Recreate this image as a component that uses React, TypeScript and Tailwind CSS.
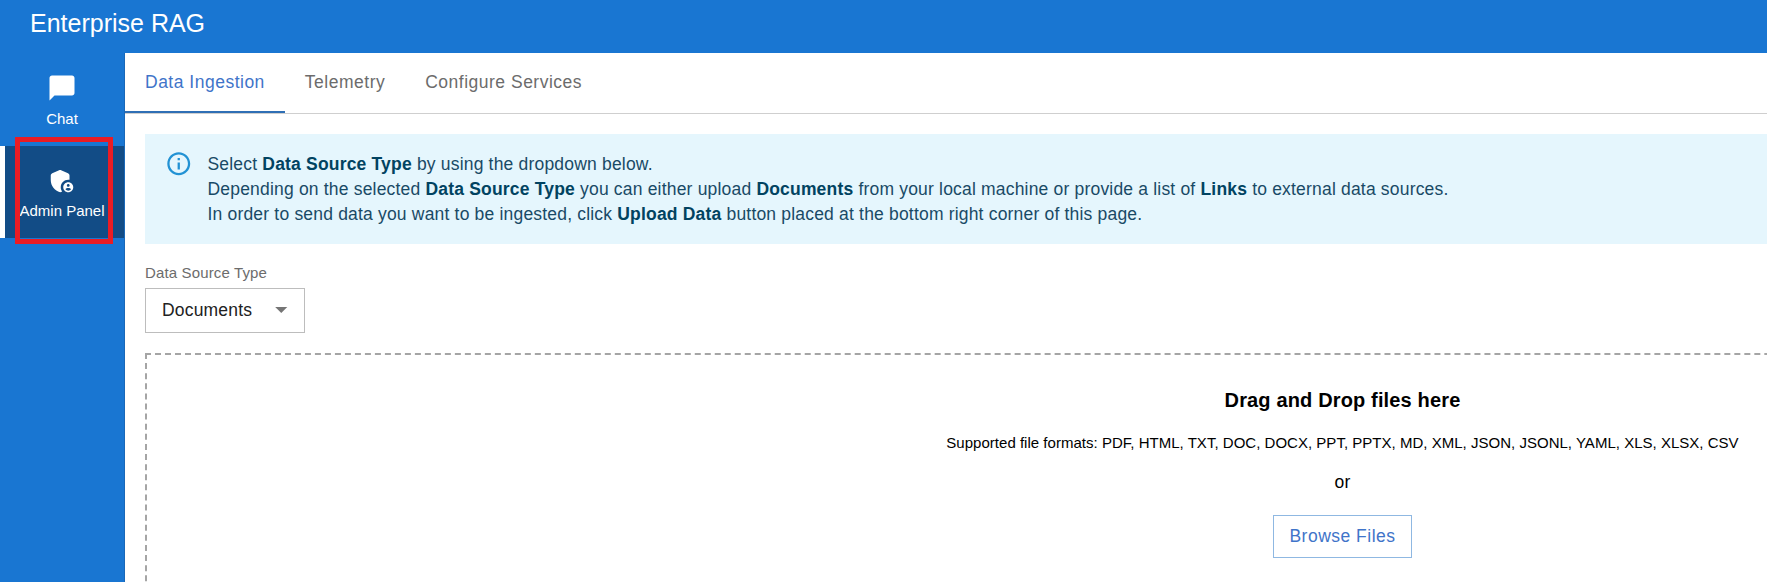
import type { ReactNode } from "react";

const tabs = ["Data Ingestion", "Telemetry", "Configure Services"];

function NavItem({ icon, label, active }: { icon: ReactNode; label: string; active?: boolean }) {
  return (
    <a
      className={
        active
          ? "relative flex h-[92px] flex-col items-center border-l-[5px] border-white bg-[#124c86] pr-[5px] pt-5 text-white"
          : "relative flex h-[93px] flex-col items-center pt-5 text-white"
      }
    >
      {icon}
      <span
        className={
          active
            ? "mt-1 whitespace-nowrap text-[15px] leading-[22px]"
            : "mt-[5px] whitespace-nowrap text-[15px] leading-[22px]"
        }
      >
        {label}
      </span>
      {active && (
        <span className="absolute left-[10px] -top-[9px] h-[107px] w-[98px] border-[5px] border-[#ea1c24]" />
      )}
    </a>
  );
}

export default function App() {
  return (
    <div className="flex h-[582px] w-full flex-col overflow-hidden bg-white font-['Liberation_Sans',Arial,sans-serif] text-[17.5px]">
      <header className="flex h-[53px] shrink-0 items-center bg-[#1976d2] pb-[6px] pl-[30px] text-[25px] text-white">
        Enterprise RAG
      </header>
      <div className="flex min-h-0 flex-1">
        <nav className="w-[125px] shrink-0 border-r border-[#1a68b8] bg-[#1976d2]">
          <NavItem
            label="Chat"
            icon={
              <svg className="size-[30px]" viewBox="0 0 24 24" fill="currentColor">
                <path d="M20 2H4c-1.1 0-2 .9-2 2v18l4-4h14c1.1 0 2-.9 2-2V4c0-1.1-.9-2-2-2z" />
              </svg>
            }
          />
          <NavItem
            active
            label="Admin Panel"
            icon={
              <svg className="size-[30px]" viewBox="0 0 24 24" fill="currentColor">
                <path d="M17 11c.34 0 .67.04 1 .09V7.58c0-.8-.47-1.52-1.2-1.83l-5.5-2.4c-.51-.22-1.09-.22-1.6 0l-5.5 2.4C3.47 6.07 3 6.79 3 7.59v3.6c0 4.54 3.2 8.79 7.5 9.82.55-.13 1.08-.32 1.6-.55-.69-.98-1.1-2.17-1.1-3.46 0-3.31 2.69-6 6-6z" />
                <path d="M17 13c-2.21 0-4 1.79-4 4s1.79 4 4 4 4-1.79 4-4-1.79-4-4-4zm0 1.38c.62 0 1.12.51 1.12 1.12s-.51 1.12-1.12 1.12-1.12-.51-1.12-1.12.5-1.12 1.12-1.12zm0 5.37c-.93 0-1.74-.46-2.24-1.17.05-.72 1.51-1.08 2.24-1.08s2.19.36 2.24 1.08c-.5.71-1.31 1.17-2.24 1.17z" />
              </svg>
            }
          />
        </nav>
        <main className="min-w-0 flex-1 overflow-hidden">
          <div className="flex w-[2435px] flex-col">
            <div className="flex h-[61px] border-b border-[#cfcfcf] tracking-[0.5px] text-[#6c6c6c]">
              {tabs.map((t, i) => (
                <div
                  key={t}
                  className={
                    i === 0
                      ? "flex h-[60px] items-center border-b-2 border-[#2f6fb5] px-5 text-[#3f74c9]"
                      : "flex h-[60px] items-center px-5 pb-[2px]"
                  }
                >
                  {t}
                </div>
              ))}
            </div>
            <div className="flex w-[2415px] flex-col pl-5 pt-5">
              <div className="flex h-[110px] bg-[#e5f6fd] pl-[20px] pt-[18px] leading-[25px] tracking-[0.1875px] text-[#194a66]">
                <svg
                  className="-mt-[2px] mr-[15px] size-[27.5px] text-[#2292d4]"
                  viewBox="0 0 24 24"
                  fill="currentColor"
                >
                  <path d="M11 7h2v2h-2zm0 4h2v6h-2zm1-9C6.480 2 2 6.480 2 12s4.480 10 10 10 10-4.480 10-10S17.520 2 12 2m0 18c-4.410 0-8-3.590-8-8s3.590-8 8-8 8 3.590 8 8-3.590 8-8 8" />
                </svg>
                <div className="[&_b]:text-[#014361]">
                  <p>
                    Select <b>Data Source Type</b> by using the dropdown below.
                  </p>
                  <p>
                    Depending on the selected <b>Data Source Type</b> you can either upload <b>Documents</b> from your
                    local machine or provide a list of <b>Links</b> to external data sources.
                  </p>
                  <p>
                    In order to send data you want to be ingested, click <b>Upload Data</b> button placed at the bottom
                    right corner of this page.
                  </p>
                </div>
              </div>
              <label className="mt-[18px] text-[15px] leading-[22px] tracking-[0.14px] text-[#6c6c6c]">
                Data Source Type
              </label>
              <div className="mt-1 flex h-[45px] w-[160px] items-center justify-between border border-[#bdbdbd] pl-4 pr-[16.5px] tracking-[0.1875px] text-[#212121]">
                <span>Documents</span>
                <svg className="h-[6.5px] w-[12.5px] text-[#757575]" viewBox="0 0 13 7" fill="currentColor">
                  <path d="M0 0h13L6.500 6.500z" />
                </svg>
              </div>
              <div className="mt-5 flex h-[400px] flex-col items-center border-2 border-dashed border-[#a5a5a5] pt-[30px] text-black">
                <h3 className="text-[20px] font-bold leading-[30px] tracking-[0.15px]">Drag and Drop files here</h3>
                <p className="mt-[17px] text-[15px] leading-[22px] tracking-[0.02px]">
                  Supported file formats: PDF, HTML, TXT, DOC, DOCX, PPT, PPTX, MD, XML, JSON, JSONL, YAML, XLS, XLSX,
                  CSV
                </p>
                <p className="mt-[16px] leading-[25px] tracking-[0.1875px]">or</p>
                <button className="mt-[20px] flex h-[43px] w-[139px] items-center justify-center border border-[#8fb8e2] tracking-[0.5px] text-[#3f74c9]">
                  Browse Files
                </button>
              </div>
            </div>
          </div>
        </main>
      </div>
    </div>
  );
}
